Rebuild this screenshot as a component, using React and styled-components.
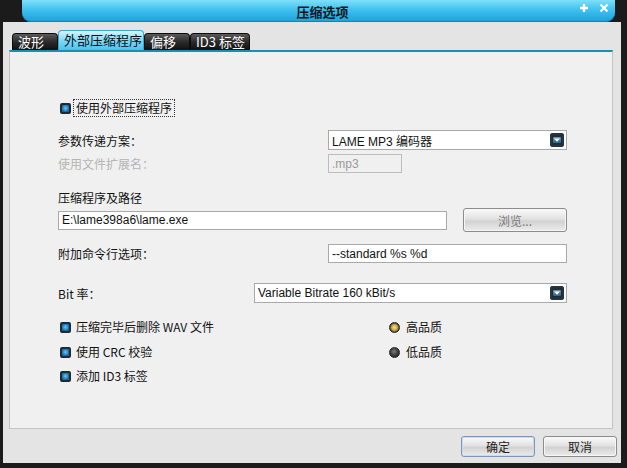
import React from 'react';
import styled, { createGlobalStyle } from 'styled-components';

const Global = createGlobalStyle`
  html, body {
    margin: 0;
    padding: 0;
    background: #1c1c1c;
  }
  body {
    font-family: "Liberation Sans", "Noto Sans CJK SC", sans-serif;
    font-size: 12px;
    color: #111;
  }
`;

const Frame = styled.div`
  width: 627px;
  height: 468px;
  box-sizing: border-box;
  background: #1b1b1b;
  display: flex;
  flex-direction: column;
  padding: 0 6px 5px 3px;
`;

const TitleBar = styled.div`
  height: 22px;
  margin: 0 6px 0 19px;
  border-radius: 0 0 9px 9px;
  background: linear-gradient(#7ee0fb 0%, #3fc0ee 45%, #18a2dc 100%);
  box-shadow: inset 0 -1px 0 #0f83b8;
  display: flex;
  align-items: center;
  justify-content: center;
  position: relative;
`;

const Title = styled.div`
  font-family: "Noto Sans CJK SC", sans-serif;
  font-weight: 700;
  font-size: 13px;
  color: #0a1620;
  margin-left: 8px;
`;

const TitleIcons = styled.div`
  position: absolute;
  right: 6px;
  top: 3px;
  display: flex;
  gap: 10px;
`;

const Body = styled.div`
  flex: 1;
  background: #e4e4e4;
  display: flex;
  flex-direction: column;
  padding: 8px 0 0 6px;
`;

const TabStrip = styled.div`
  display: flex;
  align-items: flex-end;
  height: 20px;
  padding-left: 3px;
`;

const Tab = styled.div`
  height: ${p => (p.$active ? 20 : 17)}px;
  width: ${p => p.$w}px;
  box-sizing: border-box;
  border: 1px solid ${p => (p.$active ? '#3aa6cf' : '#0c0c0c')};
  border-bottom: none;
  border-radius: 4px 4px 0 0;
  background: ${p =>
    p.$active
      ? 'linear-gradient(#d6f5ff, #7ad7f6 55%, #4cc2ec)'
      : 'linear-gradient(#5a5a5a, #2a2a2a 50%, #111)'};
  color: ${p => (p.$active ? '#04121a' : '#fff')};
  font-family: "Noto Sans CJK SC", sans-serif;
  font-size: 13px;
  line-height: ${p => (p.$active ? 18 : 15)}px;
  padding-left: 5px;
  white-space: nowrap;
`;

const Panel = styled.div`
  height: 379px;
  margin-right: 8px;
  box-sizing: border-box;
  background: #f0f0f0;
  border: 1px solid #c4c4c4;
  border-top: 2px solid #1a8fae;
  padding: 0 0 0 48px;
  display: flex;
  flex-direction: column;
`;

const Row = styled.div`
  display: flex;
  align-items: center;
  height: ${p => p.$h || 20}px;
  margin-top: ${p => p.$top}px;
`;

const Label = styled.div`
  width: ${p => p.$w || 270}px;
  flex-shrink: 0;
  font-family: "Noto Sans CJK SC", sans-serif;
  font-size: 12px;
  color: ${p => (p.$dim ? '#b4b4b4' : '#111')};
`;

const Box = styled.span`
  width: 11px;
  height: 11px;
  box-sizing: border-box;
  border-radius: 2px;
  background: radial-gradient(circle at 50% 45%, #6fc4f2 0%, #2d8fd0 45%, #1a5f95 75%);
  border: 2px solid #202a33;
  margin: 0 6px 0 2px;
  flex-shrink: 0;
`;

const Dot = styled.span`
  width: 11px;
  height: 11px;
  box-sizing: border-box;
  border-radius: 50%;
  background: ${p =>
    p.$on
      ? 'radial-gradient(circle at 50% 50%, #f5e08a 0%, #c9a84a 45%, #3a3424 75%)'
      : 'radial-gradient(circle at 45% 40%, #7a7a7a 0%, #3a3a3a 55%, #1c1c1c 90%)'};
  border: 1px solid #222;
  margin-right: 7px;
`;

const CheckText = styled.span`
  font-family: "Noto Sans CJK SC", sans-serif;
  font-size: 12px;
  padding: 0 2px;
  line-height: 16px;
  border: 1px dotted ${p => (p.$focus ? '#333' : 'transparent')};
  margin-left: -4px;
`;

const Field = styled.div`
  width: ${p => p.$w}px;
  height: ${p => p.$h || 19}px;
  box-sizing: border-box;
  border: 1px solid ${p => (p.$dim ? '#bdbdbd' : '#a9a9a9')};
  background: ${p => (p.$dim ? '#f0f0f0' : '#fff')};
  color: ${p => (p.$dim ? '#9a9a9a' : '#111')};
  display: flex;
  align-items: center;
  padding: 0 2px 0 3px;
  font-size: 12px;
  white-space: nowrap;
`;

const FieldText = styled.span`
  flex: 1;
  font-family: "Liberation Sans", "Noto Sans CJK SC", sans-serif;
`;

const DropBtn = styled.span`
  width: 14px;
  height: 14px;
  border-radius: 3px;
  background: #1f2d38;
  display: flex;
  align-items: center;
  justify-content: center;
  box-shadow: inset 0 0 0 2px #243440;
`;

const Button = styled.div`
  width: ${p => p.$w}px;
  height: ${p => p.$h}px;
  box-sizing: border-box;
  border: 1px solid ${p => (p.$focus ? '#7b96b8' : '#8c8c8c')};
  border-radius: 3px;
  background: linear-gradient(#fafafa, #e2e2e2 45%, #d2d2d2 55%, #ececec);
  box-shadow: inset 0 0 0 1px ${p => (p.$focus ? '#c9dcef' : '#f6f6f6')};
  display: flex;
  align-items: center;
  justify-content: center;
  font-family: "Noto Sans CJK SC", sans-serif;
  font-size: 12px;
  color: ${p => (p.$dim ? '#7a7a7a' : '#222')};
  flex-shrink: 0;
`;

const Options = styled.div`
  display: flex;
  flex-direction: column;
`;

const Opt = styled.div`
  display: flex;
  align-items: center;
  height: 16px;
  margin-top: ${p => p.$top}px;
`;

const OptLeft = styled.div`
  width: 331px;
  display: flex;
  align-items: center;
`;

const OptRight = styled.div`
  display: flex;
  align-items: center;
`;

const Footer = styled.div`
  flex: 1;
  display: flex;
  justify-content: flex-end;
  align-items: center;
  gap: 8px;
  padding: 1px 4px 0 0;
`;

const Arrow = () => (
  <svg width="8" height="6" viewBox="0 0 8 6">
    <defs>
      <linearGradient id="ab" x1="0" y1="0" x2="0" y2="1">
        <stop offset="0" stopColor="#bfe9ff" />
        <stop offset="1" stopColor="#2b95d6" />
      </linearGradient>
    </defs>
    <rect x="0" y="0" width="8" height="6" rx="1" fill="url(#ab)" opacity="0.55" />
    <path d="M1 1.5 L7 1.5 L4 4.8 Z" fill="#fff" />
  </svg>
);

const Select = ({ w, children }) => (
  <Field $w={w} $h={20}>
    <FieldText>{children}</FieldText>
    <DropBtn>
      <Arrow />
    </DropBtn>
  </Field>
);

export default function App() {
  return (
    <>
      <Global />
      <Frame>
        <TitleBar>
          <Title>压缩选项</Title>
          <TitleIcons>
            <svg width="10" height="10" viewBox="0 0 10 10">
              <path d="M5 1 V9 M1 5 H9" stroke="#fff" strokeWidth="2.4" />
            </svg>
            <svg width="10" height="10" viewBox="0 0 10 10">
              <path d="M1.5 1.5 L8.5 8.5 M8.5 1.5 L1.5 8.5" stroke="#fff" strokeWidth="2.2" />
            </svg>
          </TitleIcons>
        </TitleBar>
        <Body>
          <TabStrip>
            <Tab $w={46}>波形</Tab>
            <Tab $w={86} $active>外部压缩程序</Tab>
            <Tab $w={46}>偏移</Tab>
            <Tab $w={60}>ID3 标签</Tab>
          </TabStrip>
          <Panel>
            <Row $top={47} $h={18}>
              <Box />
              <CheckText $focus>使用外部压缩程序</CheckText>
            </Row>
            <Row $top={13}>
              <Label>参数传递方案：</Label>
              <Select w={239}>LAME MP3 编码器</Select>
            </Row>
            <Row $top={4} $h={19}>
              <Label $dim>使用文件扩展名：</Label>
              <Field $w={74} $dim>
                <FieldText>.mp3</FieldText>
              </Field>
            </Row>
            <Row $top={16} $h={16}>
              <Label>压缩程序及路径</Label>
            </Row>
            <Row $top={3} $h={24}>
              <Field $w={389}>
                <FieldText>E:\lame398a6\lame.exe</FieldText>
              </Field>
              <div style={{ width: 16 }} />
              <Button $w={104} $h={24} $dim>
                浏览...
              </Button>
            </Row>
            <Row $top={12} $h={19}>
              <Label>附加命令行选项：</Label>
              <Field $w={239}>
                <FieldText>--standard %s %d</FieldText>
              </Field>
            </Row>
            <Row $top={20}>
              <Label $w={196}>Bit 率：</Label>
              <Select w={313}>Variable Bitrate 160 kBit/s</Select>
            </Row>
            <Options>
              <Opt $top={16}>
                <OptLeft>
                  <Box />
                  <CheckText>压缩完毕后删除 WAV 文件</CheckText>
                </OptLeft>
                <OptRight>
                  <Dot $on />
                  <CheckText>高品质</CheckText>
                </OptRight>
              </Opt>
              <Opt $top={9}>
                <OptLeft>
                  <Box />
                  <CheckText>使用 CRC 校验</CheckText>
                </OptLeft>
                <OptRight>
                  <Dot />
                  <CheckText>低品质</CheckText>
                </OptRight>
              </Opt>
              <Opt $top={8}>
                <OptLeft>
                  <Box />
                  <CheckText>添加 ID3 标签</CheckText>
                </OptLeft>
              </Opt>
            </Options>
          </Panel>
          <Footer>
            <Button $w={74} $h={21} $focus>
              确定
            </Button>
            <Button $w={74} $h={21}>
              取消
            </Button>
          </Footer>
        </Body>
      </Frame>
    </>
  );
}
